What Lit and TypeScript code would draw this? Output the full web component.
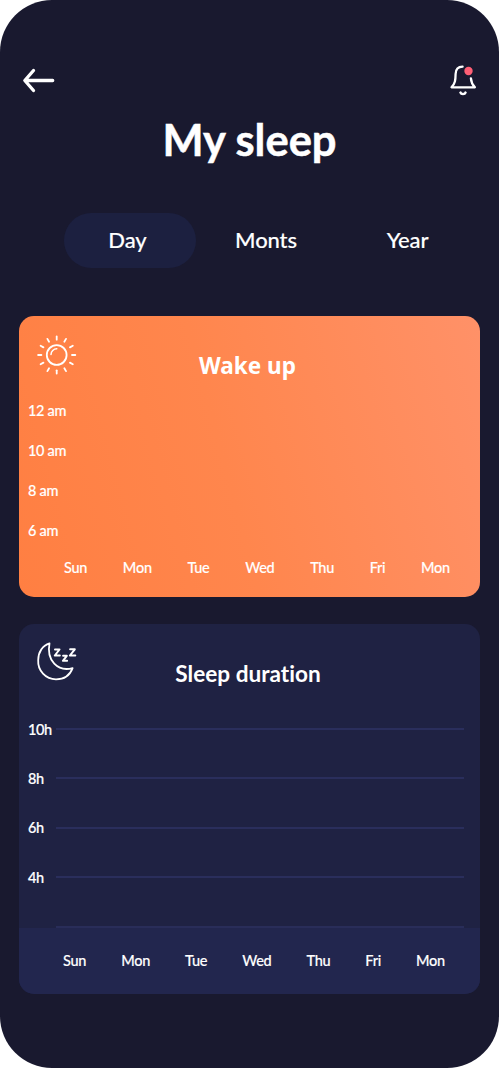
import { LitElement, html, css, svg } from "lit";
import { customElement, state } from "lit/decorators.js";
import { classMap } from "lit/directives/class-map.js";

const DAYS = ["Sun", "Mon", "Tue", "Wed", "Thu", "Fri", "Mon"];

@customElement("day-axis")
class DayAxis extends LitElement {
  static styles = css`
    :host { display: flex; justify-content: space-between; font-size: 14.5px; line-height: 20px; letter-spacing: -0.25px; -webkit-text-stroke: 0.15px #fff; }
  `;
  render() {
    return DAYS.map((d) => html`<span>${d}</span>`);
  }
}

@customElement("wake-card")
class WakeCard extends LitElement {
  static styles = css`
    :host {
      display: block; box-sizing: border-box; height: 281px; border-radius: 15px; padding-top: 17px;
      background: linear-gradient(75deg, #ff7f42 0%, #ff864d 45%, #ff9168 100%);
    }
    .head { display: grid; grid-template-columns: 76px 1fr 76px; height: 57px; }
    .icon { display: block; margin-left: 17px; }
    .title { margin: 18px 0 0 -4px; font: 700 22.5px/30px "Noto Sans", sans-serif; text-align: center; }
    .hours { display: grid; grid-auto-rows: 40.1px; margin: 0 0 0 9px; height: 157px; font-size: 14.5px; letter-spacing: -0.3px; -webkit-text-stroke: 0.15px #fff; }
    .hours span { line-height: 41px; }
    .days { margin: 11px 30px 0 45px; }
  `;
  render() {
    const rays = Array.from({ length: 12 }, (_, i) => i * 30);
    return html`
      <div class="head">
        <svg class="icon" width="44" height="44" viewBox="0 0 44 44" fill="none" stroke="#fff" stroke-linecap="round">
          <circle cx="20.7" cy="22" r="9.9" stroke-width="1.8" />
          <path d="M15 21.500a5.800 5.800 0 0 1 5.800-5.700" stroke-width="1.500" />
          ${rays.map((a) => svg`<path d="M20.7 3.4v3.3" stroke-width="1.8" transform="rotate(${a} 20.7 22)" />`)}
        </svg>
        <div class="title">Wake up</div>
      </div>
      <div class="hours">${["12 am", "10 am", "8 am", "6 am"].map((h) => html`<span>${h}</span>`)}</div>
      <day-axis class="days"></day-axis>
    `;
  }
}

@customElement("duration-card")
class DurationCard extends LitElement {
  static styles = css`
    :host { display: flex; flex-direction: column; height: 370px; border-radius: 15px; overflow: hidden; background: #1f2243; }
    .head { display: grid; grid-template-columns: 76px 1fr 76px; height: 80.5px; }
    .icon { display: block; margin: 14px 0 0 15.5px; }
    .title { margin: 35px 0 0 -3px; font-size: 22.6px; line-height: 30px; font-weight: 700; text-align: center; white-space: nowrap; font-variant-ligatures: none; }
    .row { display: grid; grid-template-columns: 28px 1fr; align-items: center; height: 49.3px; margin: 0 16px 0 9px; font-size: 14.5px; }
    .row span { letter-spacing: -0.4px; -webkit-text-stroke: 0.2px #fff; }
    .line { height: 2px; background: #2a2e5c; }
    .foot { margin-top: auto; height: 66px; background: #22264e; box-sizing: border-box; }
    .edge { height: 2px; margin: -2px 16px 0 37px; background: #292d59; }
    .days { margin: 23px 35px 0 44px; }
  `;
  render() {
    return html`
      <div class="head">
        <svg class="icon" width="46" height="46" viewBox="0 0 46 46" fill="none" stroke="#fff" stroke-width="1.8" stroke-linejoin="round" stroke-linecap="round">
          <path d="M14.500 5.300C7.600 7.400 3.200 13.900 3.200 22.200A18 18 0 0 0 21 41.300c7.600 0 13.900-4 16.600-11.200C22.800 34.200 11.200 22.300 14.500 5.300z" />
          <path stroke-width="2" d="M20 11.500h4.500l-4.700 6h5M28.100 17.800h3.700l-3.900 5h4.200M35.100 11.300h4.700l-4.900 6.200h5.400" />
        </svg>
        <div class="title">Sleep duration</div>
      </div>
      ${["10h", "8h", "6h", "4h"].map((h) => html`<div class="row"><span>${h}</span><div class="line"></div></div>`)}
      <div class="foot">
        <div class="edge"></div>
        <day-axis class="days"></day-axis>
      </div>
    `;
  }
}

@customElement("app-root")
class AppRoot extends LitElement {
  @state() private tab = "Day";
  static styles = css`
    :host { display: block; background: #fff; }
    .screen {
      box-sizing: border-box; height: 1068px; padding: 65px 19px 0; border-radius: 52px; overflow: hidden;
      background: #19192f; color: #fff; font-family: Lato, "Open Sans", sans-serif; font-weight: 500;
    }
    .bar { display: flex; justify-content: space-between; height: 32px; padding: 0 2px; }
    .title { margin: 16px 0 0; font-size: 43.5px; line-height: 52px; font-weight: 700; text-align: center; -webkit-text-stroke: 0.5px #fff; }
    .tabs { display: grid; grid-template-columns: 132px 145px 138px; margin: 48px 0 0 45px; height: 55px; font-size: 22px; letter-spacing: -0.1px; -webkit-text-stroke: 0.15px #fff; }
    .tab { display: flex; align-items: center; justify-content: center; border-radius: 28px; line-height: 28px; padding: 0 5px 1px 0; box-sizing: border-box; }
    .tab.on { background: #1c2040; }
    .wake { margin-top: 48px; }
    .duration { margin-top: 27px; }
  `;
  render() {
    return html`
      <main class="screen">
        <div class="bar">
          <svg width="36" height="32" viewBox="0 0 36 32" fill="none" stroke="#fff" stroke-width="3.3" stroke-linecap="round" stroke-linejoin="round">
            <path d="M31.700 15.500H4M12.500 5.500 3.800 15.500l8.700 10" />
          </svg>
          <svg width="30" height="32" viewBox="0 0 30 32" fill="none" stroke="#fff" stroke-width="2.3" stroke-linecap="round" stroke-linejoin="round">
            <path d="M14.600 1.700C10.300 1.800 7.700 4.600 7.600 9c-.1 6-.4 9.500-4.100 13.300h23.400c-2.600-2.700-3.700-5.500-4-9" />
            <path d="M12.500 27.600c.7 1.800 4.300 1.800 5 0" stroke-width="2.600" />
            <circle cx="20.500" cy="6" r="4.200" fill="#ff5f75" stroke="none" />
          </svg>
        </div>
        <h1 class="title">My sleep</h1>
        <nav class="tabs">
          ${["Day", "Monts", "Year"].map((t) => html`
            <div class=${classMap({ tab: true, on: t === this.tab })} @click=${() => (this.tab = t)}><span>${t}</span></div>`)}
        </nav>
        <wake-card class="wake"></wake-card>
        <duration-card class="duration"></duration-card>
      </main>
    `;
  }
}
